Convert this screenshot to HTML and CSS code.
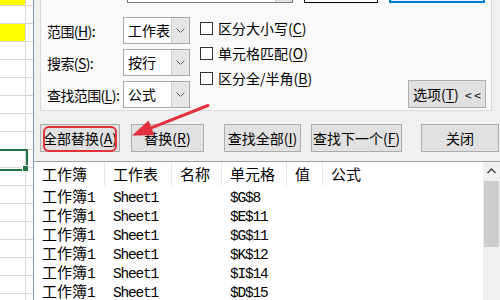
FILE: index.html
```html
<!DOCTYPE html>
<html lang="zh-CN">
<head>
    <meta charset="UTF-8">
    <title>查找和替换</title>
    <link rel="stylesheet" href="styles.css">
</head>
<body>
<div class="screen">
    <div class="sheet">
        <div class="cell-row first yellow"></div>
        <div class="cell-row"></div>
        <div class="cell-row yellow"></div>
        <div class="cell-row"></div>
        <div class="cell-row"></div>
        <div class="cell-row"></div>
        <div class="cell-row"></div>
        <div class="cell-row"></div>
        <div class="cell-row"></div>
        <div class="cell-row selected"><span class="handle"></span></div>
        <div class="cell-row"></div>
        <div class="cell-row"></div>
        <div class="cell-row"></div>
        <div class="cell-row"></div>
        <div class="cell-row"></div>
        <div class="cell-row"></div>
        <div class="cell-row"></div>
        <div class="cell-row"></div>
    </div>

    <div class="dialog">
        <div class="tabpage">
            <div class="top-row">
                <div class="combo"><span class="combo-arrow"></span></div>
                <div class="preview"></div>
                <div class="format-btn"></div>
            </div>
            <div class="options">
                <div class="fields">
                    <span class="field-label">范围(<u>H</u>):</span>
                    <div class="select">工作表<span class="drop"><svg width="9" height="6" viewBox="0 0 9 6"><path d="M0.5 0.5 L4.5 4.5 L8.5 0.5" fill="none" stroke="#606060" stroke-width="1"/></svg></span></div>
                    <span class="field-label">搜索(<u>S</u>):</span>
                    <div class="select">按行<span class="drop"><svg width="9" height="6" viewBox="0 0 9 6"><path d="M0.5 0.5 L4.5 4.5 L8.5 0.5" fill="none" stroke="#606060" stroke-width="1"/></svg></span></div>
                    <span class="field-label">查找范围(<u>L</u>):</span>
                    <div class="select">公式<span class="drop"><svg width="9" height="6" viewBox="0 0 9 6"><path d="M0.5 0.5 L4.5 4.5 L8.5 0.5" fill="none" stroke="#606060" stroke-width="1"/></svg></span></div>
                </div>
                <div class="checks">
                    <div class="check"><span class="box"></span><span>区分大小写(<u>C</u>)</span></div>
                    <div class="check"><span class="box"></span><span>单元格匹配(<u>O</u>)</span></div>
                    <div class="check"><span class="box"></span><span>区分全/半角(<u>B</u>)</span></div>
                </div>
                <button class="opt-btn">选项(<u>T</u>) <span class="chev">&lt; &lt;</span></button>
            </div>
        </div>

        <div class="actions">
            <button class="btn btn-all marked">全部替换(<u>A</u>)</button>
            <button class="btn btn-rep">替换(<u>R</u>)</button>
            <button class="btn btn-findall">查找全部(<u>I</u>)</button>
            <button class="btn btn-next">查找下一个(<u>F</u>)</button>
            <button class="btn btn-close">关闭</button>
        </div>

        <div class="results">
            <div class="table">
                <div class="thead">
                    <span>工作簿</span><span>工作表</span><span>名称</span><span>单元格</span><span>值</span><span>公式</span>
                </div>
                <div class="trow"><span>工作簿<i>1</i></span><span><i>Sheet1</i></span><span></span><span><i>$G$8</i></span><span></span><span></span></div>
                <div class="trow"><span>工作簿<i>1</i></span><span><i>Sheet1</i></span><span></span><span><i>$E$11</i></span><span></span><span></span></div>
                <div class="trow"><span>工作簿<i>1</i></span><span><i>Sheet1</i></span><span></span><span><i>$G$11</i></span><span></span><span></span></div>
                <div class="trow"><span>工作簿<i>1</i></span><span><i>Sheet1</i></span><span></span><span><i>$K$12</i></span><span></span><span></span></div>
                <div class="trow"><span>工作簿<i>1</i></span><span><i>Sheet1</i></span><span></span><span><i>$I$14</i></span><span></span><span></span></div>
                <div class="trow"><span>工作簿<i>1</i></span><span><i>Sheet1</i></span><span></span><span><i>$D$15</i></span><span></span><span></span></div>
            </div>
            <div class="scrollbar">
                <div class="scroll-up"><svg width="9" height="6" viewBox="0 0 9 6"><path d="M0.5 5 L4.5 1 L8.5 5" fill="none" stroke="#404040" stroke-width="1.4"/></svg></div>
                <div class="thumb"></div>
            </div>
        </div>
    </div>

    <svg class="annot" width="500" height="300" viewBox="0 0 500 300">
        <line x1="208" y1="105.5" x2="150" y2="128.4" stroke="#e2313c" stroke-width="3" stroke-linecap="round"/>
        <polygon points="132,135.5 148.6,120.4 154.4,135.2" fill="#e2313c"/>
    </svg>
</div>
</body>
</html>
```

FILE: styles.css
```css
body {
    margin: 0;
    font-family: "Noto Sans CJK SC", "Liberation Sans", sans-serif;
    font-size: 14px;
    color: #000;
    text-autospace: no-autospace;
}
.screen {
    position: relative;
    width: 500px;
    height: 300px;
    overflow: hidden;
    display: flex;
    background: #fff;
}
button {
    font-family: inherit;
    font-size: 14px;
    color: #000;
    padding: 0;
    text-autospace: no-autospace;
}
u {
    text-decoration-thickness: 1px;
    text-underline-offset: 2px;
}

/* spreadsheet strip */
.sheet {
    width: 33px;
    flex: none;
    background: #fff;
}
.cell-row {
    position: relative;
    height: 18px;
    box-sizing: border-box;
    border-bottom: 1px solid #d8d8d8;
    background: linear-gradient(to right, transparent 25px, #d8d8d8 25px, #d8d8d8 26px, transparent 26px);
}
.cell-row.first {
    height: 6px;
}
.cell-row.yellow {
    background: linear-gradient(to right, #ffff00 25px, #d8d8d8 25px, #d8d8d8 26px, transparent 26px);
}
.cell-row.selected::after {
    content: "";
    position: absolute;
    left: -3px;
    top: -1px;
    width: 27px;
    height: 18px;
    border: 2px solid #217346;
}
.handle {
    position: absolute;
    left: 22px;
    top: 15px;
    width: 5px;
    height: 5px;
    background: #217346;
    border: 1px solid #fff;
    z-index: 1;
}

/* dialog */
.dialog {
    flex: 1;
    display: flex;
    flex-direction: column;
    background: #f0f0f0;
    border-left: 1px solid #7f95c4;
}
.tabpage {
    box-sizing: border-box;
    width: 452px;
    height: 141px;
    margin: -20px 0 0 6px;
    background: #f9f9f9;
    border: 1px solid #dadada;
    border-top: none;
}
.top-row {
    display: flex;
    height: 23px;
    margin-left: 86px;
}
.combo {
    position: relative;
    box-sizing: border-box;
    width: 166px;
    background: #fff;
    border: 1px solid #7a7a7a;
}
.combo-arrow {
    position: absolute;
    right: 0;
    top: 0;
    bottom: 0;
    width: 16px;
    background: #e1e1e1;
    border-left: 1px solid #c8c8c8;
}
.preview {
    box-sizing: border-box;
    width: 74px;
    margin-left: 11px;
    background: #fff;
    border: 1px solid #000;
}
.format-btn {
    box-sizing: border-box;
    width: 96px;
    margin-left: 11px;
    background: #e5f1fb;
    border: 2px solid #0078d7;
}

.options {
    display: flex;
    margin-top: 14px;
    padding-left: 6px;
}
.fields {
    display: grid;
    grid-template-columns: 76px 67px;
    grid-auto-rows: 27px;
    row-gap: 5px;
    align-items: center;
}
.field-label {
    line-height: 16px;
    white-space: nowrap;
    letter-spacing: -0.6px;
}
.select {
    position: relative;
    box-sizing: border-box;
    height: 27px;
    padding-left: 4px;
    line-height: 25px;
    background: #fff;
    border: 1px solid #a8a8a8;
}
.drop {
    position: absolute;
    right: 0;
    top: 0;
    bottom: 0;
    width: 17px;
    display: flex;
    align-items: center;
    justify-content: center;
    background: #e6e6e6;
    border-left: 1px solid #cfcfcf;
}
.checks {
    display: flex;
    flex-direction: column;
    gap: 12px;
    margin: 5px 0 0 10px;
}
.check {
    display: flex;
    align-items: center;
    gap: 5px;
    height: 13px;
    line-height: 13px;
    white-space: nowrap;
}
.box {
    box-sizing: border-box;
    width: 13px;
    height: 13px;
    background: #fff;
    border: 1px solid #333;
}
.opt-btn {
    align-self: flex-end;
    box-sizing: border-box;
    width: 78px;
    height: 28px;
    margin: 0 5px 0 auto;
    line-height: 26px;
    white-space: nowrap;
    background: #e1e1e1;
    border: 1px solid #adadad;
}
.chev {
    font-size: 12px;
    margin-left: 3px;
}

/* buttons row */
.actions {
    display: flex;
    margin: 13px 0 0 6px;
}
.btn {
    position: relative;
    box-sizing: border-box;
    height: 28px;
    line-height: 26px;
    white-space: nowrap;
    background: #e1e1e1;
    border: 1px solid #adadad;
}
.btn-all { width: 80px; }
.btn-rep { width: 73px; margin-left: 11px; }
.btn-findall { width: 77px; margin-left: 20px; }
.btn-next { width: 91px; margin-left: 10px; }
.btn-close { width: 78px; margin-left: 19px; }
.marked::after {
    content: "";
    position: absolute;
    left: 2px;
    top: 1px;
    right: 2px;
    bottom: -1px;
    border: 2px solid #e2313c;
    border-radius: 6px;
}

/* results list */
.results {
    flex: 1;
    display: flex;
    margin-top: 9px;
    background: #fff;
    border-top: 1px solid #a0a0a0;
}
.table {
    flex: 1;
}
.thead,
.trow {
    display: grid;
    grid-template-columns: 71px 67px 50px 65px 36px 1fr;
}
.thead span,
.trow span {
    padding-left: 8px;
    white-space: nowrap;
    overflow: hidden;
}
.thead {
    height: 24px;
    line-height: 24px;
    font-size: 15px;
}
.thead span {
    border-right: 1px solid #e8e8e8;
}
.thead span:last-child {
    border-right: none;
}
.trow {
    height: 19px;
    line-height: 19px;
    font-size: 15px;
}
.trow i {
    font-style: normal;
    font-family: "Liberation Mono", monospace;
    font-size: 14.5px;
    letter-spacing: -1.2px;
}
.scrollbar {
    width: 17px;
    flex: none;
    background: #f0f0f0;
}
.scroll-up {
    height: 18px;
    display: flex;
    align-items: center;
    justify-content: center;
}
.thumb {
    height: 66px;
    margin: 1px 1px 0;
    background: #cdcdcd;
}

/* annotation */
.annot {
    position: absolute;
    left: 0;
    top: 0;
    pointer-events: none;
}
```
